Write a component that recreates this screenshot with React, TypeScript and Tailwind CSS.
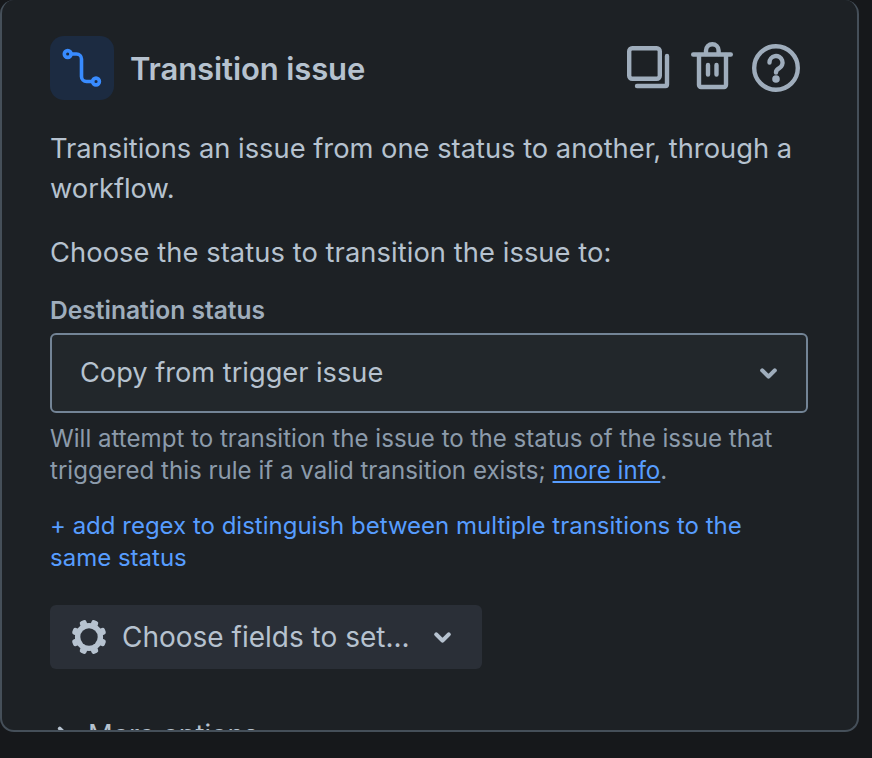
import { ChevronDown, ChevronRight } from 'lucide-react'

function TransitionGlyph() {
  return (
    <svg width="40" height="40" viewBox="0 0 40 40" fill="none" stroke="#388bff" strokeWidth="3.6" strokeLinecap="round">
      <circle cx="5.7" cy="6" r="3.4" />
      <circle cx="34" cy="33.5" r="3.4" />
      <path d="M9 6h5.5a5 5 0 0 1 5 5v17.5a5 5 0 0 0 5 5h6" />
    </svg>
  )
}

function CopyGlyph() {
  return (
    <svg width="44" height="44" viewBox="0 0 44 44" fill="none" stroke="#9fadbc" strokeWidth="4.4" strokeLinecap="round" strokeLinejoin="round">
      <rect x="2.2" y="2.2" width="30.6" height="30.6" rx="3" />
      <path d="M40 10v28.5a1.5 1.5 0 0 1-1.5 1.5H10" />
    </svg>
  )
}

function TrashGlyph() {
  return (
    <svg width="44" height="48" viewBox="0 0 44 48" fill="none" stroke="#9fadbc" strokeWidth="4.4" strokeLinecap="round" strokeLinejoin="round">
      <path d="M2.2 12.5h37.6" />
      <path d="M8 13v30a2 2 0 0 0 2 2h23a2 2 0 0 0 2-2V13" />
      <path d="M15 12V8.5a6.3 6.3 0 0 1 12.6 0V12" />
      <path d="M17 23v9.5M25.5 23v9.5" />
    </svg>
  )
}

function HelpGlyph() {
  return (
    <svg width="48" height="48" viewBox="0 0 48 48" fill="none" stroke="#9fadbc" strokeWidth="4.4" strokeLinecap="round" strokeLinejoin="round">
      <circle cx="24" cy="24" r="21.8" />
      <path d="M17.5 18.5a6.5 6.5 0 1 1 9.6 5.7c-1.9 1-3.1 2-3.1 4.3" />
      <circle cx="24" cy="35" r="1.6" fill="#9fadbc" />
    </svg>
  )
}

function GearGlyph() {
  return (
    <svg width="36" height="36" viewBox="0 0 36 36" fill="#b6c2cf">
      {[22.5, 67.5, 112.5, 157.5].map((a) => (
        <rect key={a} x="14.5" y="0.5" width="7" height="35" rx="2.2" transform={`rotate(${a} 18 18)`} />
      ))}
      <circle cx="18" cy="18" r="11.4" fill="none" stroke="#b6c2cf" strokeWidth="5.4" />
      <circle cx="18" cy="18" r="8.7" fill="#2a2f37" />
    </svg>
  )
}

export default function App() {
  return (
    <div className="h-[758px] w-[872px] bg-[#16181b] font-['Inter',sans-serif]">
      <div className="h-[732px] w-[859px] overflow-hidden rounded-[14px] border-2 border-t-0 border-[#454f59] bg-[#1d2125] pl-[48px] pr-[49px] pt-[36px]">
        <div className="flex h-[64px] items-center">
          <div className="flex h-[64px] w-[64px] items-center justify-center rounded-[14px] bg-[#1c2b41]">
            <TransitionGlyph />
          </div>
          <h2 className="ml-[16px] text-[31px] font-semibold leading-none tracking-[-0.1px] text-[#b6c2cf]">Transition issue</h2>
          <div className="ml-auto mr-[8px] flex items-center">
            <CopyGlyph />
            <div className="mb-[5px] ml-[20px]">
              <TrashGlyph />
            </div>
            <div className="ml-[17px]">
              <HelpGlyph />
            </div>
          </div>
        </div>

        <p className="mt-[29px] text-[27.3px] leading-[40px] text-[#b6c2cf]">
          Transitions an issue from one status to another, through a workflow.
        </p>
        <p className="mt-[24px] text-[27.3px] leading-[40px] tracking-[0.07px] text-[#b6c2cf]">Choose the status to transition the issue to:</p>

        <label className="mt-[22px] block text-[24.6px] font-semibold leading-[30px] text-[#9fadbc]">Destination status</label>
        <div className="mt-[8px] flex h-[80px] w-[758px] items-center justify-between rounded-[6px] border-2 border-[#738496] bg-[#22272b] pl-[28px] pr-[25px]">
          <span className="pt-[1px] text-[27.2px] text-[#b6c2cf]">Copy from trigger issue</span>
          <ChevronDown size={25} strokeWidth={4} className="text-[#9fadbc]" />
        </div>

        <p className="mt-[10px] text-[24.1px] leading-[32px] text-[#8c9bab]">
          Will attempt to transition the issue to the status of the issue that triggered this rule if a valid transition exists;{' '}
          <a className="text-[#579dff] underline">more info</a>.
        </p>

        <a className="mt-[23px] block text-[24px] leading-[32px] text-[#579dff]">
          + add regex to distinguish between multiple transitions to the same status
        </a>

        <button className="mt-[31px] flex h-[64px] w-[432px] items-center rounded-[6px] bg-[#2a2f37] pl-[21px] text-[28px] text-[#b6c2cf]">
          <GearGlyph />
          <span className="ml-[15px]">Choose fields to set...</span>
          <ChevronDown size={25} strokeWidth={4} className="ml-[20px] text-[#b6c2cf]" />
        </button>

        <div className="mt-[46px] flex items-center text-[27.3px] leading-[40px] text-[#b6c2cf]">
          <ChevronRight size={26} strokeWidth={3.5} />
          <span className="ml-[12px]">More options</span>
        </div>
      </div>
    </div>
  )
}
